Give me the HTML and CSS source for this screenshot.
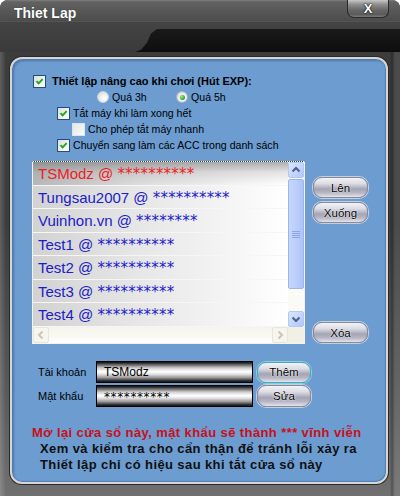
FILE: index.html
```html
<!DOCTYPE html>
<html>
<head>
<meta charset="utf-8">
<link rel="stylesheet" href="styles.css">
</head>
<body>
<div class="window">
  <div class="titlebar">
    <span class="title">Thiet Lap</span>
    <button class="close">X</button>
  </div>
  <div class="strip"><div class="notch"></div></div>
  <div class="panel">
    <div class="options">
      <div class="opt main">
        <span class="cb"><svg viewBox="0 0 11 11" width="11" height="11"><path d="M2.5 5.2 L4.6 7.4 L8.6 3.2" fill="none" stroke="#21a121" stroke-width="1.9"/></svg></span>
        <b>Thiết lập nâng cao khi chơi (Hút EXP):</b>
      </div>
      <div class="opt radios">
        <span class="radio-item"><span class="rb"></span>Quá 3h</span>
        <span class="radio-item"><span class="rb on"><span class="dot"></span></span>Quá 5h</span>
      </div>
      <div class="opt sub1">
        <span class="cb"><svg viewBox="0 0 11 11" width="11" height="11"><path d="M2.5 5.2 L4.6 7.4 L8.6 3.2" fill="none" stroke="#21a121" stroke-width="1.9"/></svg></span>
        Tắt máy khi làm xong hết
      </div>
      <div class="opt sub2">
        <span class="cb off"></span>
        Cho phép tắt máy nhanh
      </div>
      <div class="opt sub1">
        <span class="cb"><svg viewBox="0 0 11 11" width="11" height="11"><path d="M2.5 5.2 L4.6 7.4 L8.6 3.2" fill="none" stroke="#21a121" stroke-width="1.9"/></svg></span>
        Chuyển sang làm các ACC trong danh sách
      </div>
    </div>

    <div class="middle">
      <div class="listbox">
        <div class="list-main">
          <div class="rows">
            <div class="row sel">TSModz @ <span class="stars">**********</span></div>
            <div class="row">Tungsau2007 @ <span class="stars">**********</span></div>
            <div class="row">Vuinhon.vn @ <span class="stars">********</span></div>
            <div class="row">Test1 @ <span class="stars">**********</span></div>
            <div class="row">Test2 @ <span class="stars">**********</span></div>
            <div class="row">Test3 @ <span class="stars">**********</span></div>
            <div class="row">Test4 @ <span class="stars">**********</span></div>
          </div>
          <div class="vscroll">
            <div class="sb-btn"><svg viewBox="0 0 14 14" width="14" height="14"><path d="M3.5 8.5 L7 5 L10.5 8.5" fill="none" stroke="#4d6185" stroke-width="2"/></svg></div>
            <div class="thumb"><svg viewBox="0 0 8 8" width="8" height="8"><path d="M0 1.5H8M0 3.5H8M0 5.5H8M0 7.5H8" stroke="#8aa6e8" stroke-width="1"/></svg></div>
            <div class="track"></div>
            <div class="sb-btn"><svg viewBox="0 0 14 14" width="14" height="14"><path d="M3.5 5.5 L7 9 L10.5 5.5" fill="none" stroke="#4d6185" stroke-width="2"/></svg></div>
          </div>
        </div>
        <div class="hscroll">
          <div class="hs-btn"><svg viewBox="0 0 14 14" width="14" height="14"><path d="M8.5 3.5 L5 7 L8.5 10.5" fill="none" stroke="#c9c7ba" stroke-width="2"/></svg></div>
          <div class="htrack"></div>
          <div class="hs-btn"><svg viewBox="0 0 14 14" width="14" height="14"><path d="M5.5 3.5 L9 7 L5.5 10.5" fill="none" stroke="#c9c7ba" stroke-width="2"/></svg></div>
          <div class="corner"></div>
        </div>
      </div>
      <div class="side-btns">
        <button class="btn up">Lên</button>
        <button class="btn down">Xuống</button>
        <button class="btn del">Xóa</button>
      </div>
    </div>

    <div class="fields">
      <div class="field-row">
        <span class="flabel">Tài khoản</span>
        <div class="input">TSModz</div>
        <button class="btn focus">Thêm</button>
      </div>
      <div class="field-row">
        <span class="flabel">Mật khẩu</span>
        <div class="input pw">**********</div>
        <button class="btn tall">Sửa</button>
      </div>
    </div>

    <div class="notes">
      <p class="warn">Mở lại cửa sổ này, mật khẩu sẽ thành *** vĩnh viễn</p>
      <p>Xem và kiểm tra cho cẩn thận để tránh lỗi xảy ra</p>
      <p>Thiết lập chỉ có hiệu sau khi tắt cửa sổ này</p>
    </div>
  </div>
</div>
</body>
</html>
```
FILE: styles.css
```css
* { box-sizing: border-box; }
html, body { margin: 0; padding: 0; background: #ffffff; }
body {
  width: 400px; height: 496px; overflow: hidden;
  font-family: "Liberation Sans", Arial, sans-serif;
  font-size: 11px; color: #000;
}
.window {
  width: 400px; height: 496px;
  display: flex; flex-direction: column;
  border-radius: 8px 8px 0 0;
  overflow: hidden;
  background:
    linear-gradient(to right, rgba(255,255,255,0.18) 0, rgba(255,255,255,0) 6px, rgba(0,0,0,0) 390px, rgba(0,0,0,0.25) 392px, rgba(255,255,255,0.08) 395px),
    linear-gradient(to bottom, #3c3c3c 0, #3c3c3c 45%, #5a5a5a 80%, #707070 100%);
}
.titlebar {
  height: 22px; flex: 0 0 22px;
  display: flex; align-items: flex-start; justify-content: space-between;
  background: linear-gradient(to bottom, #7e7e7e 0, #626262 2px, #585858 50%, #4c4c4c 100%);
  border-bottom: 1px solid #545454;
  padding-left: 14px; padding-right: 11px;
}
.title {
  color: #fff; font-weight: bold; font-size: 14px;
  line-height: 14px; margin-top: 6px;
  text-shadow: 0 0 1px #222;
}
.close {
  width: 42px; height: 18px; margin: 0; padding: 0;
  border: 1px solid #2a2a2a; border-top: none;
  border-radius: 0 0 7px 7px;
  background: linear-gradient(to bottom, #c8c8c8 0, #909090 25%, #666 60%, #5c5c5c 85%, #7a7a7a 100%);
  color: #fff; font-family: "Liberation Sans", Arial, sans-serif;
  font-weight: bold; font-size: 13px; line-height: 15px;
  text-shadow: 0 0 2px #000, 0 0 1px #000;
}
.strip {
  height: 30px; flex: 0 0 30px;
  padding-top: 7px;
  display: flex;
  background: linear-gradient(to bottom, #444, #3a3a3a);
}
.notch {
  margin-left: auto; width: 265px; height: 23px;
  background: linear-gradient(to bottom, #1a1a1a, #0e0e0e);
  clip-path: polygon(22px 0, 100% 0, 100% 100%, 0 100%, 6px 90%, 12px 60%, 16px 20%);
}
.panel {
  margin: 5px 12px 12px 10px;
  flex: 1;
  border: 2px solid #d6d6d6;
  border-radius: 12px;
  background: #6c9cd0;
  box-shadow: 0 0 0 1px #2a2a2a, inset 2px 2px 2px rgba(30,60,100,0.35), inset -1px -1px 1px rgba(30,60,100,0.3);
  padding: 14px 0 0 20px;
  display: flex; flex-direction: column;
}
.options { padding-left: 1px; font-size: 10.6px; }
.opt {
  height: 16px; display: flex; align-items: center;
  white-space: nowrap;
}
.opt b { font-weight: bold; margin-left: 3px; font-size: 11px; }
.cb {
  width: 13px; height: 13px; flex: 0 0 13px;
  border: 1px solid #1c5180;
  background: linear-gradient(135deg, #dcdcd7 0, #f2f2ef 60%, #ffffff 100%);
  display: inline-flex; align-items: center; justify-content: center;
  margin-right: 3px;
}
.cb.off { border-color: #d8e4f0; background: linear-gradient(135deg, #e6e6e0, #fafafa); }
.sub1 { padding-left: 24px; }
.sub2 { padding-left: 39px; }
.radios { padding-left: 64px; }
.radio-item { display: flex; align-items: center; width: 79px; }
.rb {
  width: 12px; height: 12px; flex: 0 0 12px; border-radius: 50%;
  border: 1px solid #c8d4e4;
  background: radial-gradient(circle at 65% 65%, #ffffff 0, #f0f0ec 40%, #d6d6cf 100%);
  margin-right: 3px;
  display: inline-flex; align-items: center; justify-content: center;
}
.rb.on { border-color: #9fb2c8; }
.dot {
  width: 5px; height: 5px; border-radius: 50%;
  background: radial-gradient(circle at 35% 35%, #a8e6a0 0, #3aa83a 60%, #1e8a1e 100%);
}

.middle {
  display: flex; margin-top: 8px; height: 183px;
}
.listbox {
  width: 273px; height: 183px;
  border: 1px solid #f2f2f2;
  border-top: 1px dotted #444;
  display: flex; flex-direction: column;
  background: #fbfbf6;
}
.list-main { display: flex; height: 165px; }
.rows { flex: 1; display: flex; flex-direction: column; }
.row {
  height: calc(165px / 7);
  font-size: 15px; line-height: 23px;
  color: #1c1cc8;
  padding-left: 5px;
  white-space: nowrap; overflow: hidden;
  border-bottom: 1px solid #f6f6f6;
  background: linear-gradient(to right, #d2d2d2 0, #e6e6e6 40%, #f6f6f6 80%, #ffffff 100%);
}
.row.sel {
  color: #ee1d24;
  background:
    linear-gradient(to bottom, rgba(110,110,110,0.55) 0, rgba(150,150,150,0.25) 45%, rgba(255,255,255,0) 100%),
    linear-gradient(to right, #b8b8b8 0, #dcdcdc 40%, #f4f4f4 80%, #ffffff 100%);
}
.stars { font-family: "DejaVu Sans", sans-serif; letter-spacing: 0.2px; font-size: 15px; }
.vscroll {
  width: 16px; display: flex; flex-direction: column;
  background: #fbfbf6;
}
.sb-btn {
  width: 16px; height: 16px; flex: 0 0 16px;
  border: 1px solid #b4c8f6; border-radius: 2px;
  background: linear-gradient(135deg, #dce6fc 0, #c2d4fb 60%, #b0c6f8 100%);
  display: flex; align-items: center; justify-content: center;
}
.thumb {
  height: 110px; flex: 0 0 110px;
  margin-top: 1px;
  border: 1px solid #9cb5ee; border-radius: 2px;
  background: linear-gradient(to right, #c6d6fc 0, #bccffb 50%, #aec4f6 100%);
  display: flex; align-items: center; justify-content: center;
}
.track { flex: 1; }
.hscroll {
  height: 16px; display: flex;
  background: linear-gradient(to bottom, #f4f3ec, #fefefb);
}
.hs-btn {
  width: 16px; height: 16px; flex: 0 0 16px;
  border: 1px solid #e8e6dc; border-radius: 2px;
  background: #f6f5ee;
  display: flex; align-items: center; justify-content: center;
}
.htrack { flex: 1; }
.corner { width: 16px; background: #f2f0e4; }

.side-btns {
  margin-left: 8px; width: 55px;
  display: flex; flex-direction: column;
}
.btn {
  width: 55px; height: 21px; margin: 0; padding: 0;
  border: 1px solid #8a8a96;
  border-radius: 9px;
  box-shadow: 0 0 0 1px rgba(230,230,235,0.7);
  background: linear-gradient(to bottom, #f2f2f6 0, #dcdce4 30%, #a4a4b6 58%, #b6b6c6 78%, #e4e4ec 100%);
  font-family: "Liberation Sans", Arial, sans-serif;
  font-size: 11.5px; color: #000;
  text-shadow: 0 0 2px #fff, 0 0 1px #fff;
}
.btn.up { margin-top: 16px; }
.btn.down { margin-top: 4px; }
.btn.del { margin-top: auto; margin-bottom: 1px; }

.fields { margin-top: 17px; padding-left: 6px; display: flex; flex-direction: column; gap: 2px; }
.field-row { display: flex; align-items: center; height: 22px; }
.flabel { width: 58px; font-size: 11px; }
.input {
  width: 157px; height: 22px;
  border: 1px solid #000;
  background: linear-gradient(to bottom, #0c0c0c 0, #5a5a5a 12%, #cfcfcf 30%, #ffffff 48%, #e6e6e6 60%, #9a9a9a 78%, #3a3a3a 92%, #111 100%);
  font-size: 12px; line-height: 20px; padding-left: 7px;
}
.input.pw { font-family: "DejaVu Sans", sans-serif; letter-spacing: 0.6px; line-height: 22px; }
.field-row .btn { margin-left: 4px; width: 54px; }
.btn.focus { border-color: #4aa8b8; box-shadow: 0 0 0 1px rgba(140,220,230,0.8); }
.btn.tall { height: 22px; }

.notes { margin-top: 18px; }
.notes p {
  margin: 0; height: 16px; line-height: 16px;
  font-weight: bold; font-size: 13px; letter-spacing: 0.4px;
  color: #101010;
  padding-left: 8px; white-space: nowrap;
}
.notes p.warn { color: #c8101a; padding-left: 0; }
```
